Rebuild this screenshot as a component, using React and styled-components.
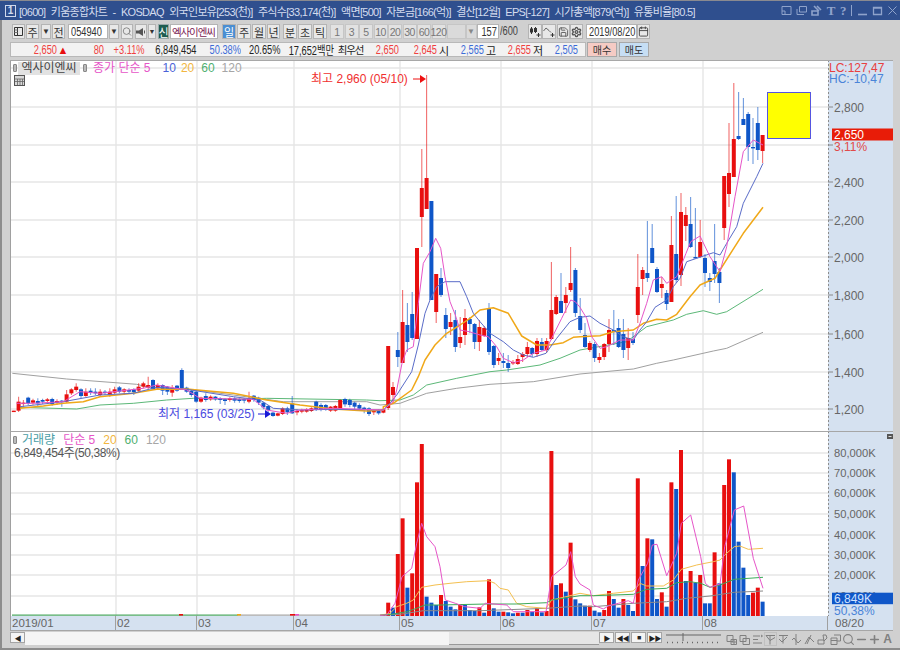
import styled, { createGlobalStyle } from "styled-components";
import { Search, Minus, Plus, Settings, Save, Calendar } from "lucide-react";

const RED = "#e80f0f";
const BLUE = "#0f56c8";
const PINK = "#e655c8";
const NAVY = "#5a6cc8";
const ORANGE = "#f0a818";
const GREEN = "#5cb878";
const GRAY = "#a0a0a0";

const GlobalStyle = createGlobalStyle`
  html, body {
    margin: 0;
    padding: 0;
    background: #d0d0d0;
  }
  * {
    box-sizing: border-box;
  }
`;

const FONT = `"Liberation Sans", "Noto Sans CJK KR", sans-serif`;

const Window = styled.div`
  width: 900px;
  height: 650px;
  overflow: hidden;
  display: flex;
  flex-direction: column;
  background: #d0d0d0;
  font-family: ${FONT};
  box-shadow: inset 2px 0 0 #8c8c8c, inset 0 -2px 0 #8c8c8c;
`;

const TitleBar = styled.div`
  height: 20px;
  flex: none;
  display: flex;
  align-items: center;
  padding: 0 2px 0 5px;
  background: #2f4f8e;
  border-top: 1px solid #8a8a90;
  color: #d4dcee;
`;

const TitleNum = styled.span`
  width: 11px;
  height: 12px;
  margin-right: 3px;
  display: flex;
  align-items: center;
  justify-content: center;
  font-size: 10px;
  font-weight: bold;
  border: 1px solid #cfd8ec;
`;

const TitleText = styled.span`
  font-size: 11px;
  letter-spacing: -0.7px;
  word-spacing: 3px;
  white-space: nowrap;
  flex: 1;
`;

const TitleIcons = styled.div`
  display: flex;
  align-items: center;
  gap: 4px;
  color: #8fa3cb;
`;

const TitleGlyph = styled.span`
  width: ${(p) => p.$w || 10}px;
  font-size: 13px;
  line-height: 14px;
  font-weight: bold;
  text-align: center;
  font-family: "Liberation Serif", serif;
`;

const Toolbar = styled.div`
  height: 21px;
  flex: none;
  display: flex;
  align-items: flex-start;
  padding: 4px 0 0 12px;
`;

const Btn = styled.div`
  width: ${(p) => p.$w || 14}px;
  height: 15px;
  margin-left: ${(p) => p.$ml || 0}px;
  flex: none;
  display: flex;
  align-items: center;
  justify-content: center;
  background: ${(p) => p.$bg || "#e8e8e8"};
  border: 1px solid ${(p) => p.$bd || "#b4b4b4"};
  color: ${(p) => p.$color || "#333"};
  font-size: ${(p) => p.$size || 11}px;
  white-space: nowrap;
`;

const NumBtn = styled(Btn)`
  letter-spacing: -0.5px;
`;

const InputBox = styled(Btn)`
  background: #fff;
  justify-content: ${(p) => (p.$right ? "flex-end" : "flex-start")};
  padding: 0 1px 0 2px;
`;

// the terminal's digits are much narrower than any installed face
const Condensed = styled.span`
  display: inline-block;
  font-size: 12.5px;
  transform: scaleX(0.74);
  transform-origin: ${(p) => (p.$right ? "right" : "left")} center;
`;

const StockName = styled(Btn)`
  background: #fff;
  color: #7a1a52;
  justify-content: flex-start;
  padding-left: 1px;
  font-size: 10.5px;
  letter-spacing: -1.1px;
`;

const Slash = styled(Condensed)`
  width: 20px;
  margin-left: 1px;
  flex: none;
  color: #444;
  white-space: nowrap;
  line-height: 15px;
`;

const QuoteRow = styled.div`
  height: 19px;
  flex: none;
  display: flex;
  align-items: flex-start;
  padding: 1px 0 0 10px;
`;

const QuotePanel = styled.div`
  height: 15px;
  width: 576px;
  flex: none;
  display: flex;
  align-items: center;
  background: #f2f2f2;
  border: 1px solid #b8b8b8;
`;

const Cell = styled.span`
  width: ${(p) => p.$w}px;
  flex: none;
  text-align: right;
  font-size: 12.5px;
  color: ${(p) => p.$color || "#222"};
  white-space: nowrap;
  transform: scaleX(0.74);
  transform-origin: right center;
`;

const WordCell = styled.span`
  width: ${(p) => p.$w}px;
  flex: none;
  text-align: center;
  font-size: ${(p) => p.$size || 11}px;
  letter-spacing: ${(p) => p.$track || 0}px;
  color: ${(p) => p.$color || "#222"};
  white-space: nowrap;
`;

const OrderBtn = styled.div`
  width: 30px;
  height: 15px;
  margin-left: ${(p) => p.$ml || 0}px;
  flex: none;
  display: flex;
  align-items: center;
  justify-content: center;
  font-size: 10px;
  color: #333;
  background: ${(p) => p.$bg};
  border: 1px solid #a8a8a8;
`;

const ChartFrame = styled.div`
  width: 883px;
  flex: none;
  margin-left: 10px;
  display: grid;
  grid-template-columns: 818px 65px;
  grid-template-rows: 371px 184px 15px;
  border-top: 1px solid #a8a8a8;
`;

const Pane = styled.div`
  position: relative;
  background: #fff;
  border-left: 1px solid #a0a0a0;
  border-bottom: ${(p) => (p.$line ? "1.5px solid #a6a6a6" : "0")};
  overflow: hidden;
`;

const AxisPane = styled.div`
  background: #d5e1f0;
  border-bottom: ${(p) => (p.$line ? "1.5px solid #a6a6a6" : "0")};
  overflow: hidden;
`;

const Plot = styled.svg`
  display: block;
`;

const Legend = styled.div`
  position: absolute;
  left: 2px;
  top: ${(p) => p.$t}px;
  height: 14px;
  display: flex;
  align-items: center;
  font-size: 12px;
  line-height: 14px;
  white-space: nowrap;
`;

const Grip = styled.span`
  width: 4px;
  height: 8px;
  margin: 0 ${(p) => p.$mr || 2}px 0 ${(p) => p.$ml || 0}px;
  background: #bbb;
  border: 1px solid #888;
  border-radius: 1px;
`;

const LegendName = styled.span`
  height: 13px;
  width: 62px;
  display: flex;
  align-items: center;
  justify-content: center;
  background: #e2e2e2;
  color: #444;
`;

const LegendItem = styled.span`
  margin-left: ${(p) => p.$ml || 0}px;
  color: ${(p) => p.$color};
`;

const SubNote = styled.div`
  position: absolute;
  left: 3px;
  top: 15px;
  font-size: 12px;
  line-height: 13px;
  letter-spacing: -0.4px;
  color: #555;
  white-space: nowrap;
`;

const TableIcon = styled.svg`
  position: absolute;
  left: 3px;
  top: 14px;
`;

const AxisText = styled.text`
  font-family: ${FONT};
  font-size: ${(p) => p.$size || 12}px;
  fill: ${(p) => p.$fill || "#666"};
`;

const Note = styled.text`
  font-family: ${FONT};
  font-size: 12px;
  fill: ${(p) => p.$fill};
`;

const TimeCell = styled.div`
  width: ${(p) => p.$w}px;
  flex: none;
  padding-left: 1px;
  font-size: 11.5px;
  line-height: 14px;
  color: #666;
  border-right: 1.5px solid #a0a0a0;
  white-space: nowrap;
`;

const TimeRow = styled.div`
  display: flex;
  background: #d5e1f0;
  border-left: 1px solid #a0a0a0;
  border-bottom: 1.5px solid #a6a6a6;
`;

const TimeEnd = styled.div`
  padding-left: 7px;
  background: #d5e1f0;
  font-size: 11.5px;
  line-height: 14px;
  color: #666;
  border-bottom: 1.5px solid #a6a6a6;
`;

const BottomBar = styled.div`
  height: 16px;
  flex: none;
  display: flex;
  align-items: flex-start;
  padding: 1px 0 0 10px;
`;

const Track = styled.div`
  width: ${(p) => p.$w}px;
  height: 13px;
  flex: none;
  background: ${(p) => p.$bg};
  border-bottom: ${(p) => (p.$edge ? "1.5px solid #9a9a9a" : "0")};
`;

const Play = styled.div`
  width: 15px;
  height: 11px;
  margin-left: ${(p) => p.$ml || 0}px;
  flex: none;
  display: flex;
  align-items: center;
  justify-content: center;
  background: #f4f4f4;
  border: 1px solid #a4a4a4;
  color: #222;
  font-size: 7px;
  letter-spacing: -1px;
`;

const Slider = styled.svg`
  margin-left: 4px;
  flex: none;
`;

const BottomIcons = styled.div`
  margin-left: 3px;
  display: flex;
  align-items: center;
  color: #808080;
`;

const Slot = styled.span`
  width: 13px;
  height: 14px;
  flex: none;
  display: flex;
  align-items: center;
  justify-content: center;
  font-size: 12px;
  font-weight: bold;
  border: ${(p) => (p.$on ? "1px solid #c0c0c0" : "0")};
`;

// page coordinates read off the reference: 3x crops with an offset
const crop = (ox, oy) => (pts) => pts.map(([x, y]) => [ox + x / 3, oy + y / 3]);
const L = crop(0, 350);
const A = crop(380, 70);
const B = crop(580, 70);
const VA = crop(380, 430);
const VB = crop(580, 430);
const toPoints = (pts) => pts.map((p) => p.map((n) => n.toFixed(1)).join(",")).join(" ");

const left = [
  ["r", 182, 182, 186, 186], ["r", 140, 155, 182, 186], ["r", 150, 158, 162, 170], ["b", 140, 143, 160, 165],
  ["r", 146, 151, 158, 164], ["b", 145, 153, 160, 170], ["b", 146, 150, 155, 162], ["r", 144, 148, 153, 158],
  ["b", 143, 147, 162, 167], ["r", 148, 153, 157, 165], ["b", 150, 152, 155, 170], ["r", 120, 133, 155, 158],
  ["r", 115, 118, 130, 135], ["r", 100, 110, 120, 125], ["b", 115, 118, 138, 145], ["r", 115, 125, 138, 140],
  ["b", 115, 122, 128, 135], ["b", 115, 125, 130, 135], ["r", 118, 125, 135, 138], ["b", 120, 125, 128, 135],
  ["r", 115, 125, 135, 140], ["r", 110, 118, 128, 132], ["b", 108, 112, 125, 130], ["r", 115, 118, 125, 135],
  ["b", 115, 120, 125, 132], ["b", 115, 118, 127, 135], ["r", 100, 110, 122, 125], ["r", 95, 100, 110, 115],
  ["r", 80, 105, 112, 118], ["b", 88, 90, 118, 120], ["r", 100, 105, 115, 118], ["b", 103, 105, 122, 135],
  ["b", 108, 110, 125, 135], ["r", 105, 113, 128, 140], ["b", 105, 107, 122, 125], ["b", 55, 60, 115, 118],
  ["b", 110, 113, 125, 128], ["b", 118, 122, 135, 140], ["b", 122, 125, 155, 158], ["r", 140, 143, 155, 158],
  ["b", 130, 138, 150, 155], ["r", 136, 140, 148, 152], ["b", 138, 140, 148, 152], ["b", 142, 145, 150, 162],
  ["b", 145, 148, 153, 165], ["r", 142, 145, 150, 155], ["b", 142, 145, 152, 158], ["b", 145, 148, 153, 158],
  ["b", 145, 147, 152, 160], ["r", 125, 145, 155, 160], ["b", 135, 137, 150, 155], ["b", 140, 143, 158, 165],
  ["b", 155, 158, 172, 178], ["b", 165, 168, 180, 190], ["b", 185, 188, 198, 200], ["r", 188, 190, 197, 199],
  ["r", 172, 175, 192, 195], ["b", 170, 175, 187, 195], ["b", 138, 160, 190, 192], ["r", 178, 183, 187, 196],
  ["r", 176, 180, 185, 190], ["r", 175, 178, 185, 188], ["r", 172, 175, 183, 186], ["b", 152, 155, 180, 183],
  ["b", 160, 165, 180, 184], ["b", 162, 165, 178, 182], ["r", 168, 170, 182, 186], ["r", 165, 168, 182, 185],
  ["r", 148, 150, 175, 178], ["b", 143, 147, 163, 170], ["b", 146, 150, 165, 172], ["b", 155, 158, 170, 178],
  ["b", 160, 165, 176, 182], ["b", 170, 173, 180, 190], ["b", 172, 175, 192, 198], ["r", 178, 182, 187, 195],
  ["b", 178, 182, 190, 194], ["r", 175, 178, 188, 190],
].map(([c, wt, bt, bb, wb]) => [c, 350 + wt / 3, 350 + bt / 3, 350 + bb / 3, 350 + wb / 3]);

const right = [
  ["r", 346, 346, 408, 410], ["r", 382, 387, 395, 403], ["b", 332, 350, 357, 367], ["r", 290, 322, 363, 363],
  ["b", 303, 325, 342, 352], ["b", 292, 314, 338, 340], ["r", 248, 248, 339, 339], ["r", 149, 188, 217, 247],
  ["r", 75, 178, 209, 209], ["b", 201, 201, 300, 300], ["r", 274, 274, 312, 323], ["b", 268, 278, 295, 297],
  ["b", 308, 315, 329, 338], ["r", 313, 322, 327, 335], ["b", 310, 320, 347, 352], ["r", 317, 337, 343, 348],
  ["r", 309, 318, 335, 345], ["b", 317, 319, 324, 333], ["b", 323, 324, 342, 349], ["r", 320, 327, 342, 351],
  ["r", 326, 328, 336, 337], ["b", 303, 308, 352, 355], ["b", 345, 346, 365, 368], ["r", 353, 358, 361, 365],
  ["b", 353, 361, 363, 368], ["b", 355, 363, 368, 372], ["r", 360, 362, 363, 365], ["r", 355, 359, 364, 365],
  ["r", 352, 354, 357, 362], ["r", 342, 347, 354, 357], ["b", 347, 348, 354, 357], ["r", 338, 341, 354, 357],
  ["b", 338, 342, 350, 351], ["r", 338, 341, 350, 353], ["r", 262, 310, 339, 340], ["r", 295, 297, 314, 315],
  ["b", 273, 301, 313, 313], ["r", 287, 295, 303, 313], ["r", 247, 283, 290, 292], ["b", 268, 270, 313, 317],
  ["b", 298, 316, 330, 333], ["b", 323, 335, 347, 348], ["r", 341, 343, 350, 352], ["b", 342, 344, 358, 362],
  ["r", 353, 357, 360, 363], ["r", 343, 344, 357, 360], ["r", 319, 330, 344, 352], ["b", 310, 330, 332, 345],
  ["b", 319, 328, 347, 348], ["b", 319, 334, 350, 358], ["r", 328, 338, 348, 360], ["b", 332, 339, 343, 345],
  ["r", 254, 287, 315, 323], ["r", 267, 270, 279, 295], ["b", 221, 273, 278, 282], ["b", 224, 248, 263, 263],
  ["b", 267, 269, 292, 293], ["r", 277, 284, 288, 298], ["b", 290, 293, 304, 310], ["r", 216, 245, 302, 302],
  ["b", 196, 254, 280, 283], ["r", 193, 212, 275, 286], ["r", 207, 215, 226, 241], ["b", 197, 224, 247, 248],
  ["b", 208, 257, 258, 258], ["r", 220, 242, 257, 258], ["b", 254, 258, 273, 287], ["b", 273, 278, 282, 291],
  ["b", 224, 261, 274, 283], ["b", 268, 272, 283, 303], ["r", 176, 176, 228, 240], ["r", 123, 173, 194, 207],
  ["r", 83, 139, 177, 177], ["b", 92, 136, 139, 140], ["b", 98, 119, 125, 125], ["b", 112, 114, 147, 161],
  ["b", 118, 147, 148, 164], ["b", 107, 123, 150, 160], ["r", 135, 135, 151, 163],
];

const candles = [...left, ...right];
const barX = (i) => 13.8 + 4.8 * i;

const volume = [
  ["r", 518], ["b", 533], ["r", 372], ["r", 265], ["b", 473], ["r", 430], ["r", 157], ["r", 42], ["b", 500], ["b", 518],
  ["b", 525], ["r", 495], ["b", 513], ["b", 530], ["b", 538], ["r", 522], ["b", 525], ["b", 540], ["b", 543], ["r", 532],
  ["b", 548], ["r", 448], ["b", 535], ["b", 545], ["r", 545], ["b", 547], ["b", 550], ["r", 548], ["b", 548], ["r", 540],
  ["b", 545], ["r", 535], ["b", 547], ["r", 543], ["r", 63], ["b", 465], ["r", 460], ["b", 485], ["r", 338], ["b", 508],
  ["b", 520], ["b", 527], ["r", 527], ["b", 542], ["b", 547], ["r", 540], ["r", 483], ["b", 507], ["b", 533], ["r", 507],
  ["b", 525], ["b", 543], ["r", 145], ["b", 408], ["r", 325], ["b", 328], ["b", 507], ["r", 487], ["b", 530], ["r", 157],
  ["b", 177], ["r", 60], ["b", 453], ["r", 423], ["b", 458], ["r", 435], ["b", 520], ["b", 520], ["r", 367], ["b", 460],
  ["r", 165], ["r", 88], ["b", 127], ["b", 335], ["b", 413], ["b", 495], ["r", 488], ["r", 473], ["b", 515],
];

const maPink = [
  ...L([[50, 160], [100, 160], [190, 155], [240, 125], [300, 130], [430, 115], [470, 105], [560, 120], [600, 145], [760, 148], [800, 180], [860, 190], [900, 180], [1000, 175], [1150, 180]]),
  ...A([[40, 995], [50, 960], [66, 880], [80, 840], [100, 830], [115, 700], [130, 580], [150, 545], [167, 505], [182, 535], [195, 620], [210, 695], [226, 735], [240, 780], [268, 785], [300, 795], [325, 800], [350, 830], [370, 865], [400, 878], [430, 870], [460, 850], [498, 840], [520, 795], [545, 745], [572, 690], [586, 695]]),
  ...B([[0, 712], [20, 745], [35, 800], [60, 835], [80, 830], [120, 810], [160, 810], [180, 760], [200, 700], [220, 630], [245, 620], [260, 640], [290, 620], [318, 550], [332, 515], [360, 498], [390, 560], [420, 605], [440, 530], [465, 380], [490, 245], [520, 210], [549, 225]]),
];
const maNavy = [
  ...L([[60, 170], [190, 155], [300, 135], [400, 130], [470, 112], [560, 118], [700, 140], [780, 150], [820, 175], [900, 180], [1000, 178], [1150, 180]]),
  ...A([[30, 1000], [50, 975], [95, 905], [115, 825], [135, 730], [150, 690], [170, 650], [195, 635], [240, 635], [260, 680], [280, 730], [300, 755], [330, 790], [370, 815], [400, 840], [430, 855], [460, 862], [498, 850], [530, 805], [570, 755]]),
  ...B([[0, 742], [30, 738], [60, 760], [100, 780], [130, 800], [160, 810], [180, 780], [200, 755], [225, 712], [260, 690], [280, 650], [300, 625], [320, 575], [350, 565], [400, 548], [420, 555], [440, 520], [470, 470], [490, 400], [530, 320], [549, 280]]),
];
const maOrange = [
  ...L([[60, 175], [130, 168], [190, 160], [250, 155], [300, 140], [400, 130], [470, 118], [560, 117], [700, 130], [800, 150], [900, 165], [1000, 177], [1100, 183], [1150, 180]]),
  ...A([[10, 1010], [40, 1000], [95, 960], [115, 920], [135, 870], [165, 825], [200, 790], [240, 765], [270, 745], [300, 720], [340, 713], [385, 730], [425, 798], [470, 825], [510, 825], [550, 818], [580, 802]]),
  ...B([[0, 800], [60, 797], [100, 785], [160, 780], [190, 760], [230, 748], [260, 750], [290, 733], [330, 680], [360, 645], [405, 625], [420, 600], [490, 490], [549, 412]]),
];
const maGreen = [
  ...L([[60, 172], [230, 177], [300, 165], [400, 160], [500, 150], [580, 145], [700, 148], [800, 145], [1100, 150]]),
  ...A([[0, 992], [60, 990], [100, 975], [140, 945], [230, 925], [330, 905], [380, 900], [480, 885], [540, 865]]),
  ...B([[0, 840], [140, 815], [200, 770], [280, 750], [320, 733], [370, 722], [410, 733], [440, 725], [549, 658]]),
];
const maGray = [
  ...L([[37, 70], [200, 87], [410, 103], [470, 118], [560, 117], [700, 135], [850, 155], [1100, 155]]),
  ...A([[0, 1005], [60, 1000], [140, 970], [230, 955], [330, 943], [460, 935]]),
  ...B([[0, 912], [160, 897], [230, 880], [280, 870], [400, 843], [440, 835], [549, 787]]),
];

const volPink = [
  ...VA([[0, 556], [20, 555], [45, 520], [66, 440], [95, 415], [110, 340], [125, 280], [140, 320], [165, 350], [180, 410], [196, 510], [226, 520], [254, 530], [300, 535], [316, 520], [380, 525], [400, 545], [498, 545], [515, 440], [558, 405], [572, 365], [586, 440]]),
  ...VB([[0, 462], [30, 480], [40, 525], [70, 537], [85, 528], [115, 520], [145, 512], [160, 520], [175, 450], [203, 400], [217, 345], [231, 343], [260, 437], [290, 370], [304, 280], [332, 255], [362, 380], [376, 460], [390, 472], [420, 462], [434, 350], [463, 240], [491, 228], [520, 385], [549, 475]]),
];
const volOrange = [
  ...VA([[0, 556], [30, 550], [50, 530], [80, 520], [100, 510], [125, 472], [165, 465], [210, 460], [260, 455], [325, 452], [345, 460], [360, 475], [385, 480], [410, 520], [440, 530], [498, 535], [515, 510], [558, 500]]),
  ...VB([[0, 490], [40, 497], [100, 490], [160, 483], [180, 460], [200, 468], [250, 468], [280, 450], [304, 418], [350, 405], [375, 400], [400, 395], [420, 390], [434, 375], [463, 350], [480, 348], [505, 358], [549, 355]]),
];
const volGreen = [
  ...VA([[0, 556], [40, 552], [80, 545], [110, 535], [135, 525], [180, 525], [320, 522], [410, 522], [500, 518], [515, 510]]),
  ...VB([[0, 497], [40, 497], [160, 493], [200, 478], [260, 475], [290, 458], [330, 455], [362, 460], [390, 472], [420, 465], [463, 448], [549, 442]]),
];
const volGray = [
  ...VA([[0, 556], [60, 553], [130, 542], [300, 542], [500, 535]]),
  ...VB([[0, 528], [40, 530], [160, 520], [260, 515], [320, 505], [390, 498], [463, 487], [549, 483]]),
];

const priceGrid = [68, 107, 145, 182, 220, 257, 295, 334, 372, 409];
const volGrid = [453, 473, 493, 514, 535, 555, 575, 596];
const monthX = [116, 197, 294, 400, 501, 592, 703];

const GridLines = ({ rows, y0, y1 }) => (
  <g stroke="#e6e6e6" strokeWidth="1.4">
    {rows.map((y) => (
      <line key={y} x1="10" x2="828" y1={y} y2={y} />
    ))}
    {monthX.map((x) => (
      <line key={x} x1={x} x2={x} y1={y0} y2={y1} />
    ))}
  </g>
);

const Candle = ({ data, i }) => {
  const [c, wt, bt, bb, wb] = data;
  const x = barX(i);
  const color = c === "r" ? RED : BLUE;
  return (
    <g>
      <line x1={x} x2={x} y1={wt} y2={wb} stroke={color} strokeWidth="1.1" strokeOpacity="0.6" />
      <rect x={x - 2} width="4" y={bt} height={Math.max(bb - bt, 1.4)} fill={color} />
    </g>
  );
};

const MaLine = ({ pts, color, w }) => (
  <polyline points={toPoints(pts)} fill="none" stroke={color} strokeWidth={w || 1} strokeLinejoin="round" />
);

const Arrow = ({ x, y, color }) => (
  <g fill={color} stroke={color}>
    <line x1={x} x2={x + 10} y1={y} y2={y} strokeWidth="1" />
    <polygon points={`${x + 7},${y - 4} ${x + 13},${y} ${x + 7},${y + 4}`} strokeWidth="0" />
  </g>
);

const PriceChart = () => (
  <Plot width="817" height="369.5" viewBox="11 61 817 369.5">
    <GridLines rows={priceGrid} y0={60} y1={431} />
    <MaLine pts={maGray} color={GRAY} />
    <MaLine pts={maGreen} color={GREEN} />
    {candles.map((d, i) => (
      <Candle key={i} data={d} i={i} />
    ))}
    <MaLine pts={maOrange} color={ORANGE} w={1.5} />
    <MaLine pts={maNavy} color={NAVY} />
    <MaLine pts={maPink} color={PINK} />
    <rect x="767.5" y="92.5" width="43" height="46" fill="#ff0" stroke="#5555e0" />
    <Note $fill="#f03030" x="311" y="83">최고 2,960 (05/10)</Note>
    <Arrow x={413} y={79} color="#ee1010" />
    <Note $fill="#4a4ae0" x="158" y="418">최저 1,165 (03/25)</Note>
    <Arrow x={258} y={414} color="#1818d8" />
  </Plot>
);

const VolumeChart = () => (
  <Plot width="817" height="184" viewBox="11 432 817 184">
    <GridLines rows={volGrid} y0={432} y1={616} />
    <g>
      <line x1="12" x2="238" y1="615.2" y2="615.2" stroke="#4da862" strokeWidth="1.2" />
      <line x1="238" x2="386" y1="615.2" y2="615.2" stroke="#a6a6a6" strokeWidth="1.2" />
      <rect x="179" y="614" width="4" height="1.6" fill={RED} />
      <rect x="237" y="614" width="4" height="1.6" fill={ORANGE} />
      <rect x="290" y="614" width="5" height="1.6" fill={RED} />
      <rect x="295" y="614" width="4" height="1.6" fill={PINK} />
      <rect x="381.6" y="615" width="3.4" height="1" fill={RED} />
    </g>
    {volume.map(([c, top], i) => {
      const y = 430 + top / 3;
      return <rect key={i} x={barX(78 + i) - 2} width="4" y={y} height={616 - y} fill={c === "r" ? RED : BLUE} />;
    })}
    <MaLine pts={volGray} color="#8a8a8a" />
    <MaLine pts={volOrange} color="#f4c050" />
    <MaLine pts={volGreen} color="#3caa5a" />
    <MaLine pts={volPink} color={PINK} />
  </Plot>
);

const priceLabels = [
  ["2,800", 107],
  ["2,400", 182],
  ["2,200", 220],
  ["2,000", 257],
  ["1,800", 295],
  ["1,600", 334],
  ["1,400", 372],
  ["1,200", 409],
];

const PriceAxis = () => (
  <Plot width="65" height="369.5" viewBox="828 61 65 369.5">
    <line x1="828.5" x2="828.5" y1="60" y2="431" stroke="#8c8c8c" strokeDasharray="2 2" />
    <AxisText $fill="#e84040" x="829" y="71.5">LC:127,47</AxisText>
    <AxisText $fill="#4a84d8" x="829" y="83">HC:-10,47</AxisText>
    {priceLabels.map(([t, y]) => (
      <g key={t}>
        <line x1="828" x2="833" y1={y} y2={y} stroke="#888" />
        <AxisText x="834" y={y + 4.5}>{t}</AxisText>
      </g>
    ))}
    <line x1="828" x2="833" y1="145" y2="145" stroke="#888" />
    <rect x="832" y="128.5" width="61" height="12" fill="#e81c08" />
    <AxisText $fill="#fff" x="834" y="139">2,650</AxisText>
    <AxisText $fill="#e04a4a" x="834" y="151">3,11%</AxisText>
  </Plot>
);

const volLabels = [
  ["80,000K", 453],
  ["70,000K", 473],
  ["60,000K", 493],
  ["50,000K", 514],
  ["40,000K", 535],
  ["30,000K", 555],
  ["20,000K", 575],
  ["10,000K", 596],
];

const VolumeAxis = () => (
  <Plot width="65" height="184" viewBox="828 432 65 184">
    <line x1="828.5" x2="828.5" y1="431" y2="616" stroke="#8c8c8c" strokeDasharray="2 2" />
    <rect x="887" y="434" width="6" height="5" fill="#555" />
    <line x1="888.5" x2="891.5" y1="436.5" y2="436.5" stroke="#ddd" />
    {volLabels.map(([t, y]) => (
      <AxisText key={t} $size={11.2} x="834" y={y + 4}>{t}</AxisText>
    ))}
    <rect x="832" y="592.7" width="61" height="11.5" fill={BLUE} />
    <AxisText $fill="#d0e2ff" x="834" y="603">6,849K</AxisText>
    <AxisText $fill="#4a84d8" x="834" y="614.5">50,38%</AxisText>
  </Plot>
);

const PanelGlyph = ({ w = 11, children }) => (
  <svg width={w} height="11" viewBox={`0 0 ${w} 11`} fill="none" stroke="currentColor" strokeWidth="1">
    {children}
  </svg>
);

const numbers = ["1", "3", "5", "10", "20", "30", "60", "120"];

export default function App() {
  return (
    <>
      <GlobalStyle />
      <Window>
        <TitleBar>
          <TitleNum>1</TitleNum>
          <TitleText>
            [0600] 키움종합차트 - KOSDAQ 외국인보유[253(천)] 주식수[33,174(천)] 액면[500] 자본금[166(억)] 결산[12월] EPS[-127] 시가총액[879(억)] 유통비율[80.5]
          </TitleText>
          <TitleIcons>
            <PanelGlyph><path d="M1 1.5h9v8H1zM4 9.5V6H1" /></PanelGlyph>
            <PanelGlyph><path d="M3.5 1.5h7v5.5h-7zM1 4v5.5h7" /></PanelGlyph>
            <PanelGlyph><path d="M1 6h6v4H1zM3 1l5 5M6 1l4 4" strokeWidth="1.6" /></PanelGlyph>
            <TitleGlyph>T</TitleGlyph>
            <TitleGlyph $w={6}>?</TitleGlyph>
            <PanelGlyph w={3}><path d="M1.5 0v11" /></PanelGlyph>
            <PanelGlyph><path d="M1 9.5h9" strokeWidth="1.6" /></PanelGlyph>
            <PanelGlyph><path d="M1.5 2.5h8v7h-8zM1.5 3h8" strokeWidth="1.3" /></PanelGlyph>
            <PanelGlyph><path d="M1.5 1.5l8 8M9.5 1.5l-8 8" /></PanelGlyph>
          </TitleIcons>
        </TitleBar>

        <Toolbar>
          <Btn $w={13}>
            <svg width="11" height="11" viewBox="0 0 11 11" fill="none" stroke="#333">
              <path d="M1.5 1.5h8v8h-8zM4.5 1.5v8" />
              <path d="M1.5 4h3M1.5 6.5h3" stroke="#777" />
            </svg>
          </Btn>
          <Btn $w={13} $ml={1}>주</Btn>
          <Btn $w={10} $ml={2} $size={8}>▼</Btn>
          <Btn $w={13} $ml={1}>전</Btn>
          <InputBox $w={40} $ml={3}><Condensed>054940</Condensed></InputBox>
          <Btn $w={10} $ml={1} $size={8}>▼</Btn>
          <Btn $w={12} $ml={2} $color="#777">
            <Search size={11} strokeWidth={2} />
          </Btn>
          <Btn $w={12} $ml={2}>
            <svg width="10" height="10" viewBox="0 0 10 10" fill="#555">
              <path d="M0 3.5h3L7 1v8L3 6.5H0z" />
              <path d="M8.5 3.5v3" stroke="#555" />
            </svg>
          </Btn>
          <Btn $w={8} $ml={1} $size={7}>▼</Btn>
          <Btn $w={11} $ml={2} $bg="#1d5c50" $bd="#9aa" $color="#fff">신</Btn>
          <StockName $w={48} $ml={1}>엑사이엔씨</StockName>
          <Btn $w={14} $ml={4} $bg="#4a8ed2" $color="#fff">일</Btn>
          <Btn $w={14} $ml={1}>주</Btn>
          <Btn $w={14} $ml={1}>월</Btn>
          <Btn $w={13} $ml={1}>년</Btn>
          <Btn $w={14} $ml={3}>분</Btn>
          <Btn $w={14} $ml={1}>초</Btn>
          <Btn $w={14} $ml={1}>틱</Btn>
          {numbers.map((n, i) => (
            <NumBtn key={n} $w={14} $ml={i === 0 ? 3 : 0.5} $bg="#e2e2e2" $bd="#c6c6c6" $color="#777" $size={10.5}>
              {n}
            </NumBtn>
          ))}
          <Btn $w={19} $ml={1} $bg="#dadada" $bd="#c6c6c6" />
          <Btn $w={11} $bg="#dadada" $bd="#c6c6c6" $color="#888" $size={8}>▼</Btn>
          <InputBox $w={22} $right><Condensed $right>157</Condensed></InputBox>
          <Slash>/600</Slash>
          <Btn $w={14} $ml={8}>
            <svg width="12" height="12" viewBox="0 0 12 12" fill="#333" stroke="#333">
              <path d="M2.5 1v7M6.5 1v6" />
              <rect x="1.5" y="3" width="2" height="3" />
              <rect x="5.5" y="2.5" width="2" height="3" />
              <path d="M9.5 7v4M7.5 9h4" />
            </svg>
          </Btn>
          <Btn $w={14} $ml={0.5} $color="#777">
            <svg width="12" height="12" viewBox="0 0 12 12" fill="none" stroke="#666">
              <path d="M0.5 5l2.5-3 3 2.5 2 2" />
              <path d="M9.5 7v4M7.5 9h4" stroke="#333" />
            </svg>
          </Btn>
          <Btn $w={13} $ml={0.5} $color="#555"><Save size={12} /></Btn>
          <Btn $w={13} $ml={0.5} $color="#555"><Settings size={12} strokeWidth={3} /></Btn>
          <InputBox $w={51} $ml={3}><Condensed>2019/08/20</Condensed></InputBox>
          <Btn $w={13} $color="#444"><Calendar size={11} /></Btn>
        </Toolbar>

        <QuoteRow>
          <QuotePanel>
            <Cell $w={46} $color="#f04040">2,650</Cell>
            <WordCell $w={12} $color={RED}>▲</WordCell>
            <Cell $w={35} $color="#f04040">80</Cell>
            <Cell $w={37} $color="#f04040">+3.11%</Cell>
            <Cell $w={55}>6,849,454</Cell>
            <Cell $w={45} $color="#3c6cd8">50.38%</Cell>
            <Cell $w={31}>20.65%</Cell>
            <Cell $w={62}>17,652백만</Cell>
            <WordCell $w={33} $size={10.5} $track={-1.2}>최우선</WordCell>
            <Cell $w={32} $color="#f04040">2,650</Cell>
            <Cell $w={38} $color="#f04040">2,645</Cell>
            <WordCell $w={14}>시</WordCell>
            <Cell $w={33} $color="#3c6cd8">2,565</Cell>
            <WordCell $w={14}>고</WordCell>
            <Cell $w={33} $color="#f04040">2,655</Cell>
            <WordCell $w={14}>저</WordCell>
            <Cell $w={33} $color="#3c6cd8">2,505</Cell>
          </QuotePanel>
          <OrderBtn $ml={1} $bg="#f6cbc4">매수</OrderBtn>
          <OrderBtn $ml={2} $bg="#c6def4">매도</OrderBtn>
        </QuoteRow>

        <ChartFrame>
          <Pane $line>
            <PriceChart />
            <Legend $t={0}>
              <Grip $mr={1} />
              <LegendName>엑사이엔씨</LegendName>
              <Grip $ml={3} $mr={6} />
              <LegendItem $color={PINK}>종가 단순 5</LegendItem>
              <LegendItem $color="#4a62d8" $ml={12}>10</LegendItem>
              <LegendItem $color="#f2b640" $ml={5}>20</LegendItem>
              <LegendItem $color="#4fb070" $ml={7}>60</LegendItem>
              <LegendItem $color="#a6a6a6" $ml={7}>120</LegendItem>
            </Legend>
            <TableIcon width="11" height="11" viewBox="0 0 11 11">
              <rect x="0.5" y="0.5" width="10" height="10" fill="#d8d8d8" stroke="#555" />
              <path d="M1 4h9M1 6.5h9M3.5 4v6M6 4v6M8.5 4v6" stroke="#666" strokeWidth="0.8" />
            </TableIcon>
          </Pane>
          <AxisPane $line>
            <PriceAxis />
          </AxisPane>
          <Pane>
            <VolumeChart />
            <Legend $t={1}>
              <Grip $mr={5} />
              <LegendItem $color="#4a9ea6">거래량</LegendItem>
              <LegendItem $color={PINK} $ml={8}>단순 5</LegendItem>
              <LegendItem $color="#f2b640" $ml={8}>20</LegendItem>
              <LegendItem $color="#4fb070" $ml={8}>60</LegendItem>
              <LegendItem $color="#a6a6a6" $ml={8}>120</LegendItem>
            </Legend>
            <SubNote>6,849,454주(50,38%)</SubNote>
          </Pane>
          <AxisPane>
            <VolumeAxis />
          </AxisPane>
          <TimeRow>
            <TimeCell $w={105}>2019/01</TimeCell>
            <TimeCell $w={81}>02</TimeCell>
            <TimeCell $w={97}>03</TimeCell>
            <TimeCell $w={106}>04</TimeCell>
            <TimeCell $w={101}>05</TimeCell>
            <TimeCell $w={91}>06</TimeCell>
            <TimeCell $w={111}>07</TimeCell>
            <TimeCell $w={125}>08</TimeCell>
          </TimeRow>
          <TimeEnd>08/20</TimeEnd>
        </ChartFrame>

        <BottomBar>
          <Play>◀</Play>
          <Track $w={424} $bg="#f5f5f5" />
          <Track $w={150} $bg="#e6e6e6" $edge />
          <Play>▶</Play>
          <Play $ml={1}>◀◀</Play>
          <Play $ml={1}>■</Play>
          <Play $ml={1}>▶▶</Play>
          <Slider width="56" height="13" viewBox="0 0 56 13" fill="none" stroke="#666">
            <path d="M0 3h55M17 1v8" />
            <path d="M1 10.5h54" strokeDasharray="1 4" strokeWidth="1.6" />
          </Slider>
          <BottomIcons>
            <Slot><PanelGlyph><path d="M1 1.5h6v6H1zM5 5.5h5.5v5H5zM8 6v4M5.5 8h5" /></PanelGlyph></Slot>
            <Slot><PanelGlyph><path d="M1 1.5h6v6H1zM4 4.5h6.5v6H4z" /></PanelGlyph></Slot>
            <Slot><PanelGlyph><path d="M1 2h7M1 5.5h5M1 9h9M9 1l1.5 1L9 3" /></PanelGlyph></Slot>
            <Slot $on><PanelGlyph><path d="M1 1.5h9M5 1.5v9M1 1.5l4 5 5-3" /></PanelGlyph></Slot>
            <Slot><PanelGlyph><path d="M1 1.5h9M5 1.5v8M1 5l3 3 5-5" /></PanelGlyph></Slot>
            <Slot><PanelGlyph><path d="M5 0v11M1 6l2-2 4 5 3-3" /></PanelGlyph></Slot>
            <Slot><PanelGlyph><path d="M1 10l4-7 5 5M7 1L3 10" /></PanelGlyph></Slot>
            <Slot><PanelGlyph><path d="M6 1h3l1 3-3 3zM1 6h6v4H1z" /></PanelGlyph></Slot>
            <Slot><PanelGlyph><path d="M1 4h6v6.5H1zM4 1h6.5v6H7M1 6.5h6" /></PanelGlyph></Slot>
            <Slot><Search size={13} strokeWidth={2} /></Slot>
            <Slot><Minus size={13} strokeWidth={3} /></Slot>
            <Slot><Plus size={13} strokeWidth={3} /></Slot>
            <Slot>A</Slot>
          </BottomIcons>
        </BottomBar>
      </Window>
    </>
  );
}
